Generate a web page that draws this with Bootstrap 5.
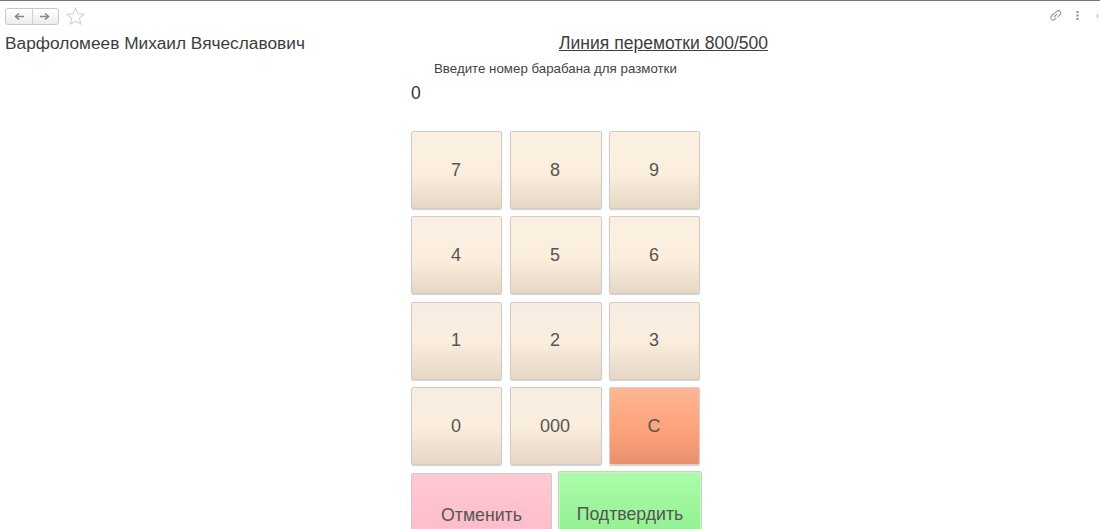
<!DOCTYPE html>
<html lang="ru"><head><meta charset="utf-8"><title>Линия перемотки</title>
<link href="https://cdn.jsdelivr.net/npm/bootstrap@5.3.0/dist/css/bootstrap.min.css" rel="stylesheet">
<style>
html,body{height:529px;overflow:hidden;background:#fff}
body{font-family:"Liberation Sans",Arial,sans-serif;color:#3d3d3d;border-top:1px solid #777}
.tool-strip{height:27px;padding:7px 0 0 5px}
.nav-pair{width:54px;height:17px;border:1px solid #c8c8c8;border-radius:3px;background:linear-gradient(#fff,#ececec)}
.nav-pair span{flex:1;display:flex;align-items:center;justify-content:center}
.nav-pair span+span{border-left:1px solid #d0d0d0}
.star-ic{margin-left:7px;margin-top:-1px}
.right-ics{margin-left:auto;margin-top:1px;gap:0}
.link-ic{margin-right:14px}
.dots-ic{margin-right:17px}
.head-line{height:30px;line-height:30px;padding-left:5px}
.who{width:554px;white-space:nowrap;font-size:17.3px}
.line-title{text-decoration:underline;white-space:nowrap;font-size:17.55px}
.prompt{margin-left:434px;font-size:13.3px;line-height:20px;margin-top:1px;color:#444}
.value-out{margin-left:411px;font-size:17.5px;line-height:24px;margin-top:2px;color:#333}
.pad-zone{margin:26px 0 0 411px;width:291px}
.key-grid{display:grid;grid-template-columns:91px 92px 91px;column-gap:7.5px;grid-auto-rows:78px;row-gap:7.4px;width:289px}
.pad-key{border:1px solid #d0cbc5;border-radius:2px;font-size:18px;color:#555;padding:0 1px 0 0;font-family:inherit;background:linear-gradient(#faefe1 0,#fbeedd 55%,#e6d7c5 100%);box-shadow:0 1px 1px rgba(0,0,0,.18)}
.pad-key.soft{background:linear-gradient(#f6ece2 0,#fbeedd 50%,#e6d6c6 100%)}
.pad-key.clear{background:linear-gradient(#fdb794 0,#fea27a 55%,#e89070 100%);border-color:#dcc}
.act-row{display:flex;margin-top:8px;height:70px}
.act-btn{border:1px solid #d4c8c8;border-radius:2px;font-size:17.7px;color:#555;padding:15px 0 0;font-family:inherit;height:70px}
.act-cancel{width:141px;background:linear-gradient(#ffcad4,#fdbac8)}
.act-ok{width:144px;margin-left:6px;margin-top:-2px;height:72px;background:linear-gradient(#abfcaa,#8eef8e);border:1px solid #b3e59c;box-shadow:inset 0 0 0 1px #d8e8d8}
</style></head>
<body>
<div class="tool-strip d-flex align-items-start">
  <div class="nav-pair d-flex">
    <span><svg width="12" height="9" viewBox="0 0 12 9"><path d="M11 4.5H3M6 1.5L2.5 4.5 6 7.5" fill="none" stroke="#888" stroke-width="1.6"/></svg></span>
    <span><svg width="12" height="9" viewBox="0 0 12 9"><path d="M1 4.5H9M6 1.5L9.5 4.5 6 7.5" fill="none" stroke="#888" stroke-width="1.6"/></svg></span>
  </div>
  <svg class="star-ic" width="19" height="18" viewBox="0 0 18 17"><path d="M9 1l2.3 5.3 5.7.5-4.3 3.8 1.3 5.6L9 13.3 4 16.2l1.3-5.6L1 6.8l5.7-.5z" fill="#fff" stroke="#d2d2d2" stroke-width="1"/></svg>
  <div class="right-ics d-flex align-items-center">
    <svg class="link-ic" width="13" height="13" viewBox="0 0 13 13"><path d="M5 8l3-3M5.2 4.2L2.4 7a2.3 2.3 0 0 0 3.3 3.3L7.4 8.6M5.6 4.4l2-2A2.3 2.3 0 0 1 10.9 5.7L8.8 7.8" fill="none" stroke="#999" stroke-width="1.1"/></svg>
    <svg class="dots-ic" width="3" height="9" viewBox="0 0 3 9"><rect x=".5" y="0" width="2" height="2" fill="#888"/><rect x=".5" y="3.5" width="2" height="2" fill="#888"/><rect x=".5" y="7" width="2" height="2" fill="#888"/></svg>
    <svg width="4" height="6" viewBox="0 0 4 6"><path d="M.5 1l2 2-2 2" fill="none" stroke="#aaa"/></svg>
  </div>
</div>
<div class="head-line d-flex"><div class="who">Варфоломеев Михаил Вячеславович</div><div class="line-title">Линия перемотки 800/500</div></div>
<div class="prompt">Введите номер барабана для размотки</div>
<div class="value-out">0</div>
<div class="pad-zone">
  <div class="key-grid">
    <button class="pad-key">7</button><button class="pad-key">8</button><button class="pad-key">9</button>
    <button class="pad-key">4</button><button class="pad-key">5</button><button class="pad-key">6</button>
    <button class="pad-key soft">1</button><button class="pad-key soft">2</button><button class="pad-key soft">3</button>
    <button class="pad-key soft">0</button><button class="pad-key soft">000</button><button class="pad-key clear">С</button>
  </div>
  <div class="act-row">
    <button class="act-btn act-cancel">Отменить</button>
    <button class="act-btn act-ok">Подтвердить</button>
  </div>
</div>
<script src="https://cdn.jsdelivr.net/npm/bootstrap@5.3.0/dist/js/bootstrap.bundle.min.js"></script>
</body></html>
